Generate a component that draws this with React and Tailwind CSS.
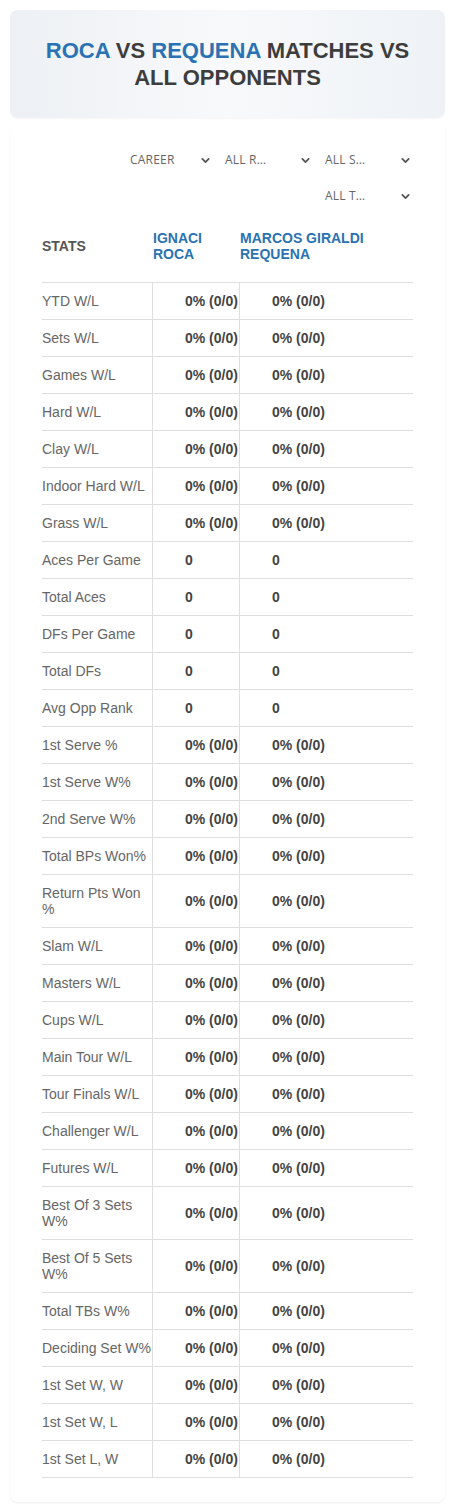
const FILTERS = [
  { label: 'CAREER', w: 'w-[90px]' },
  { label: 'ALL R…', w: 'w-[95px]' },
  { label: 'ALL S…', w: 'w-[95px]' },
  { label: 'ALL T…', w: 'w-[95px]' },
];

const PCT = '0% (0/0)';

const ROWS = [
  ['YTD W/L', PCT],
  ['Sets W/L', PCT],
  ['Games W/L', PCT],
  ['Hard W/L', PCT],
  ['Clay W/L', PCT],
  ['Indoor Hard W/L', PCT],
  ['Grass W/L', PCT],
  ['Aces Per Game', '0'],
  ['Total Aces', '0'],
  ['DFs Per Game', '0'],
  ['Total DFs', '0'],
  ['Avg Opp Rank', '0'],
  ['1st Serve %', PCT],
  ['1st Serve W%', PCT],
  ['2nd Serve W%', PCT],
  ['Total BPs Won%', PCT],
  ['Return Pts Won %', PCT],
  ['Slam W/L', PCT],
  ['Masters W/L', PCT],
  ['Cups W/L', PCT],
  ['Main Tour W/L', PCT],
  ['Tour Finals W/L', PCT],
  ['Challenger W/L', PCT],
  ['Futures W/L', PCT],
  ['Best Of 3 Sets W%', PCT],
  ['Best Of 5 Sets W%', PCT],
  ['Total TBs W%', PCT],
  ['Deciding Set W%', PCT],
  ['1st Set W, W', PCT],
  ['1st Set W, L', PCT],
  ['1st Set L, W', PCT],
];

function Chevron() {
  return (
    <svg width="9" height="9" viewBox="0 0 10 10" fill="none" aria-hidden="true">
      <path d="M1.5 3.2l3.5 3.5 3.5-3.5" stroke="#555" strokeWidth="2" strokeLinecap="round" strokeLinejoin="round" />
    </svg>
  );
}

function FilterSelect({ label, w }) {
  return (
    <div className={`${w} h-7 flex items-center justify-between pl-[7px] pr-[3px]`}>
      <span className="text-[12px] text-[#666] tracking-[0.2px] font-[family-name:'Open_Sans',sans-serif]">{label}</span>
      <Chevron />
    </div>
  );
}

export default function App() {
  return (
    <div className="bg-white min-h-[1512px] px-[10px] pt-[10px] font-[family-name:'Liberation_Sans',Arial,sans-serif]">
      {/* Title card */}
      <div className="rounded-lg bg-gradient-to-r from-[#edf0f4] via-[#f8f9fb] to-[#eef2f6] shadow-[0_1px_2px_rgba(0,0,0,0.04)] px-[30px] py-[27px] text-center">
        <h1 className="text-[22px] leading-[27px] font-bold text-[#3d3d3d]">
          <span className="text-[#2a72b3]">ROCA</span> VS <span className="text-[#2a72b3]">REQUENA</span> MATCHES VS ALL OPPONENTS
        </h1>
      </div>

      {/* Stats card */}
      <div className="mt-[10px] rounded-b-lg bg-white shadow-[0_1px_2px_rgba(0,0,0,0.07)] px-8 pt-[18px] pb-6">
        <div className="flex flex-wrap justify-end gap-x-[5px] gap-y-2">
          {FILTERS.map(f => (
            <FilterSelect key={f.label} label={f.label} w={f.w} />
          ))}
        </div>

        <div className="mt-5">
          {/* header */}
          <div className="grid grid-cols-[110px_87px_1fr] items-center pb-5 border-b border-[#dedede] text-[14px] leading-4 font-bold">
            <div className="text-[#555]">STATS</div>
            <div className="pl-px text-[#2a72b3]">IGNACI<br />ROCA</div>
            <div className="pl-px text-[#2a72b3]">MARCOS GIRALDI<br />REQUENA</div>
          </div>

          {ROWS.map(([label, val]) => (
            <div key={label} className="grid grid-cols-[110px_87px_87px_1fr] border-b border-[#dedede] text-[14px] leading-4">
              <div className="py-[10px] text-[#666]">{label}</div>
              <div className="py-[10px] pl-[32px] border-l border-[#dedede] font-bold text-[#444] whitespace-nowrap flex items-center">{val}</div>
              <div className="py-[10px] pl-[32px] border-l border-[#dedede] font-bold text-[#444] whitespace-nowrap flex items-center">{val}</div>
              <div />
            </div>
          ))}
        </div>
      </div>
    </div>
  );
}
